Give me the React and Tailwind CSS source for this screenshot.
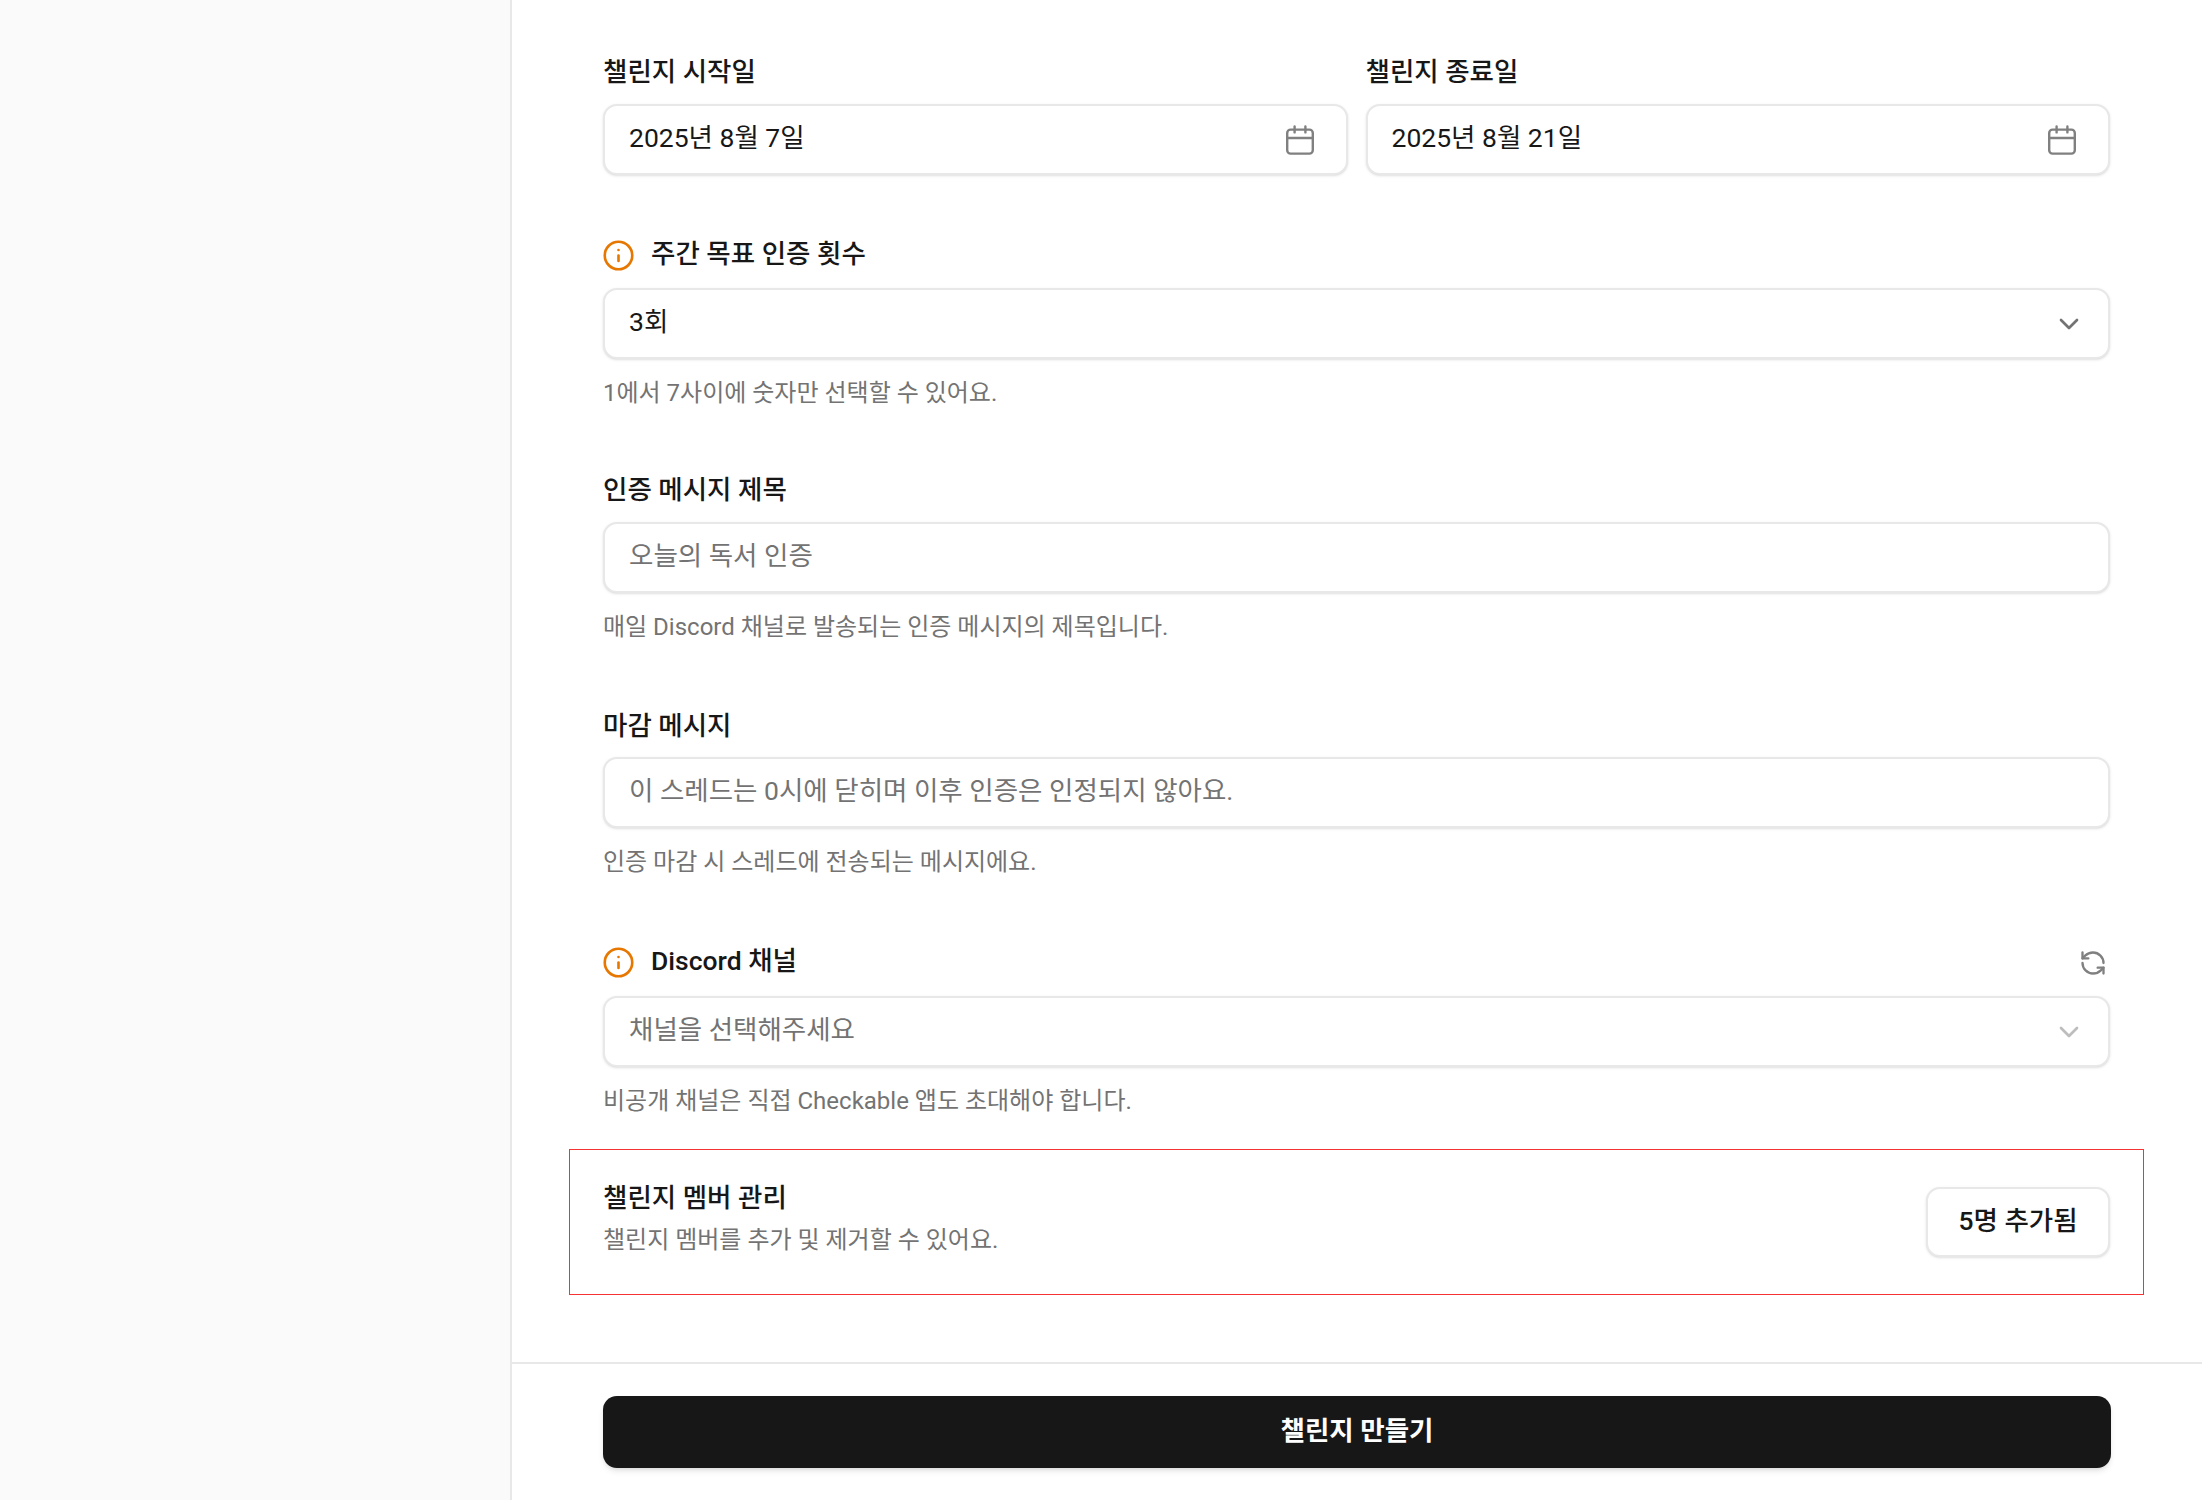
import { ChevronDown, Info, RefreshCcw } from 'lucide-react'

function CalendarIcon() {
  return (
    <svg width="28" height="30" viewBox="0 0 28 30" fill="none" stroke="#808080" strokeWidth="2.4" strokeLinecap="round" strokeLinejoin="round" className="shrink-0">
      <rect x="1.2" y="4.6" width="25.6" height="24" rx="3.4" />
      <path d="M1.2 13h25.6" />
      <path d="M8.6 1.4v6M19.4 1.4v6" />
    </svg>
  )
}

function Label({ children, info, className = '' }) {
  return (
    <div className={`flex items-center h-[28px] text-[#171717] text-[26.5px] font-medium ${className}`}>
      {info && <Info size={33} strokeWidth={1.9} className="text-[#e67700] -ml-[1px] mr-[16px] mt-[2px] shrink-0" />}
      {children}
    </div>
  )
}

function Hint({ children, className = 'mt-[20px]' }) {
  return <p className={`flex items-center h-[28px] text-[#737373] text-[24px] ${className}`}>{children}</p>
}

function Box({ children, right, placeholder = false, className = '' }) {
  return (
    <div className={`flex items-center justify-between h-[71px] pl-[24px] bg-white border-2 border-[#e8e8e8] rounded-[14px] shadow-sm ${className}`}>
      <span className={`text-[26.5px] -mt-[3px] ${placeholder ? 'text-[#737373]' : 'text-[#171717]'}`}>{children}</span>
      {right}
    </div>
  )
}

function Chevron({ faded }) {
  return <ChevronDown size={32} strokeWidth={2} className={`shrink-0 ${faded ? 'text-[#bdbdbd]' : 'text-[#737373]'}`} />
}

export default function App() {
  return (
    <div className="flex w-[2202px] h-[1500px] overflow-hidden bg-white font-[Roboto,'Noto_Sans_CJK_KR',sans-serif]">
      <aside className="w-[512px] shrink-0 bg-[#fafafa] border-r-2 border-[#e8e8e8]" />
      <main className="flex-1 flex flex-col min-w-0">
        <div className="h-[1362px] pl-[91px] pr-[92px] pt-[58px] overflow-hidden">
          <div className="grid grid-cols-2 gap-[18px]">
            <div>
              <Label className="mb-[18px]">챌린지 시작일</Label>
              <Box right={<CalendarIcon />} className="pr-[32px]">2025년 8월 7일</Box>
            </div>
            <div>
              <Label className="mb-[18px]">챌린지 종료일</Label>
              <Box right={<CalendarIcon />} className="pr-[32px]">2025년 8월 21일</Box>
            </div>
          </div>

          <div className="mt-[65px]">
            <Label info className="mb-[20px]">주간 목표 인증 횟수</Label>
            <Box right={<Chevron />} className="pr-[23px]">3회</Box>
            <Hint>1에서 7사이에 숫자만 선택할 수 있어요.</Hint>
          </div>

          <div className="mt-[69px]">
            <Label className="mb-[18px]">인증 메시지 제목</Label>
            <Box placeholder>오늘의 독서 인증</Box>
            <Hint>매일 Discord 채널로 발송되는 인증 메시지의 제목입니다.</Hint>
          </div>

          <div className="mt-[71px]">
            <Label className="mb-[17px]">마감 메시지</Label>
            <Box placeholder>이 스레드는 0시에 닫히며 이후 인증은 인정되지 않아요.</Box>
            <Hint>인증 마감 시 스레드에 전송되는 메시지에요.</Hint>
          </div>

          <div className="mt-[69px]">
            <div className="flex items-center justify-between mb-[19px]">
              <Label info>Discord 채널</Label>
              <RefreshCcw size={28} strokeWidth={2} className="text-[#808080] mr-[3px] mt-[4px]" />
            </div>
            <Box placeholder right={<Chevron faded />} className="pr-[23px]">채널을 선택해주세요</Box>
            <Hint>비공개 채널은 직접 Checkable 앱도 초대해야 합니다.</Hint>
          </div>

          <div className="flex items-center justify-between h-[146px] mt-[34px] -mx-[34px] px-[33px] border border-[#f53333]">
            <div className="-mt-[6px]">
              <div className="flex items-center h-[28px] text-[#171717] text-[26.5px] font-medium">챌린지 멤버 관리</div>
              <p className="flex items-center h-[28px] mt-[14px] text-[#737373] text-[24px]">챌린지 멤버를 추가 및 제거할 수 있어요.</p>
            </div>
            <button className="flex items-center justify-center w-[184px] h-[70px] pb-[2px] bg-white border-2 border-[#e8e8e8] rounded-[14px] shadow-sm text-[#171717] text-[26.5px] font-medium">
              5명 추가됨
            </button>
          </div>
        </div>

        <div className="flex-1 border-t-2 border-[#e8e8e8] px-[91px] pt-[32px]">
          <button className="flex items-center justify-center w-full h-[72px] pb-[2px] bg-[#171717] rounded-[14px] shadow-md text-white text-[26.5px] font-semibold">
            챌린지 만들기
          </button>
        </div>
      </main>
    </div>
  )
}
